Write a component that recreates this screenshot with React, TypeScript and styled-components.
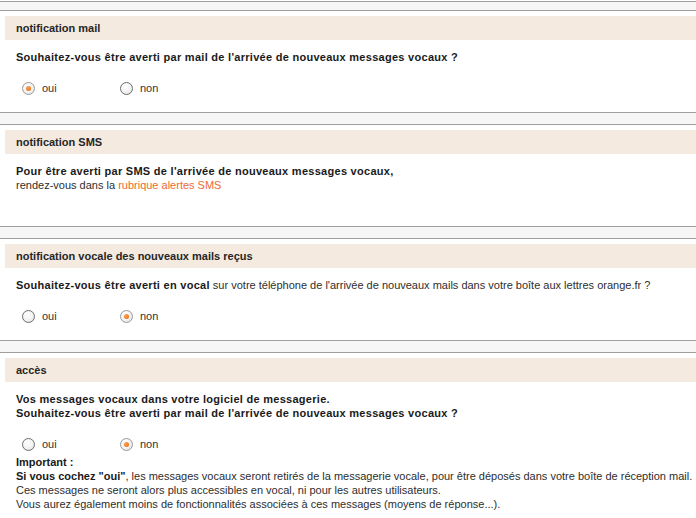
import styled, { createGlobalStyle } from "styled-components";

const GlobalStyle = createGlobalStyle`
  html, body {
    margin: 0;
    padding: 0;
    background: #ffffff;
  }
  body {
    font-family: "Liberation Sans", Arial, sans-serif;
    font-size: 11px;
    color: #1c1c1c;
  }
`;

const Page = styled.div`
  width: 696px;
  padding-top: 1px;
`;

const Separator = styled.div<{ $band: number }>`
  height: ${(p) => p.$band}px;
  background: #f6f6f6;
  border-top: 1px solid #9f9f9f;
  border-bottom: 1px solid #9f9f9f;
  margin-bottom: 5px;
`;

const Header = styled.div`
  height: 24px;
  margin-left: 5px;
  padding-left: 11px;
  display: flex;
  align-items: center;
  background: #f5eadf;
  font-weight: bold;
  font-size: 11px;
  color: #262626;
`;

const Body = styled.div`
  min-height: 72px;
  box-sizing: border-box;
  padding: 10px 0 0 16px;
`;

// question lines are a touch wider in the original
const Line = styled.div<{ $bold?: boolean; $wide?: boolean }>`
  line-height: 14px;
  font-weight: ${(p) => (p.$bold ? "bold" : "normal")};
  color: ${(p) => (p.$bold ? "#1a1a1a" : "#2e2e2e")};
  letter-spacing: ${(p) => (p.$wide ? "0.28px" : "normal")};
  white-space: nowrap;
`;

const Strong = styled.b<{ $wide?: boolean }>`
  color: #1a1a1a;
  letter-spacing: ${(p) => (p.$wide ? "0.28px" : "normal")};
`;

const Link = styled.a`
  color: #ee6a32;
  text-decoration: none;
`;

const Radios = styled.div`
  display: flex;
  margin: 17px 0 0 6px;
  height: 14px;
`;

const Option = styled.label`
  width: 98px;
  display: flex;
  align-items: center;
  gap: 7px;
  color: #333333;
  font-size: 11px;
`;

const Radio = styled.span<{ $checked?: boolean }>`
  position: relative;
  width: 11px;
  height: 11px;
  border-radius: 50%;
  border: 1px solid ${(p) => (p.$checked ? "#9a9a9a" : "#6e6e6e")};
  background: radial-gradient(circle at 40% 35%, #ffffff 0%, #f2f2f2 55%, #d8d8d8 100%);
  flex-shrink: 0;

  &::after {
    content: "";
    display: ${(p) => (p.$checked ? "block" : "none")};
    position: absolute;
    left: 3px;
    top: 3px;
    width: 5px;
    height: 5px;
    border-radius: 50%;
    background: radial-gradient(circle at 40% 35%, #f8a35a 0%, #e8771f 70%, #d9661a 100%);
  }
`;

const Important = styled.div`
  margin-top: 4px;
`;

type RadioRowProps = { yes: boolean };

const RadioRow = ({ yes }: RadioRowProps) => (
  <Radios>
    <Option>
      <Radio $checked={yes} />
      oui
    </Option>
    <Option>
      <Radio $checked={!yes} />
      non
    </Option>
  </Radios>
);

const App = () => {
  return (
    <>
      <GlobalStyle />
      <Page>
        <Separator $band={8} />
        <Header>notification mail</Header>
        <Body>
          <Line $bold $wide>Souhaitez-vous être averti par mail de l'arrivée de nouveaux messages vocaux ?</Line>
          <RadioRow yes={true} />
        </Body>

        <Separator $band={11} />
        <Header>notification SMS</Header>
        <Body>
          <Line $bold $wide>Pour être averti par SMS de l'arrivée de nouveaux messages vocaux,</Line>
          <Line>
            rendez-vous dans la <Link href="#">rubrique alertes SMS</Link>
          </Line>
        </Body>

        <Separator $band={11} />
        <Header>notification vocale des nouveaux mails reçus</Header>
        <Body>
          <Line>
            <Strong $wide>Souhaitez-vous être averti en vocal</Strong> sur votre téléphone de l'arrivée de nouveaux
            mails dans votre boîte aux lettres orange.fr ?
          </Line>
          <RadioRow yes={false} />
        </Body>

        <Separator $band={11} />
        <Header>accès</Header>
        <Body>
          <Line $bold $wide>Vos messages vocaux dans votre logiciel de messagerie.</Line>
          <Line $bold $wide>Souhaitez-vous être averti par mail de l'arrivée de nouveaux messages vocaux ?</Line>
          <RadioRow yes={false} />
          <Important>
            <Line $bold>Important :</Line>
            <Line>
              <Strong>Si vous cochez "oui"</Strong>, les messages vocaux seront retirés de la messagerie vocale,
              pour être déposés dans votre boîte de réception mail.
            </Line>
            <Line>Ces messages ne seront alors plus accessibles en vocal, ni pour les autres utilisateurs.</Line>
            <Line>Vous aurez également moins de fonctionnalités associées à ces messages (moyens de réponse...).</Line>
          </Important>
        </Body>
      </Page>
    </>
  );
};

export default App;
